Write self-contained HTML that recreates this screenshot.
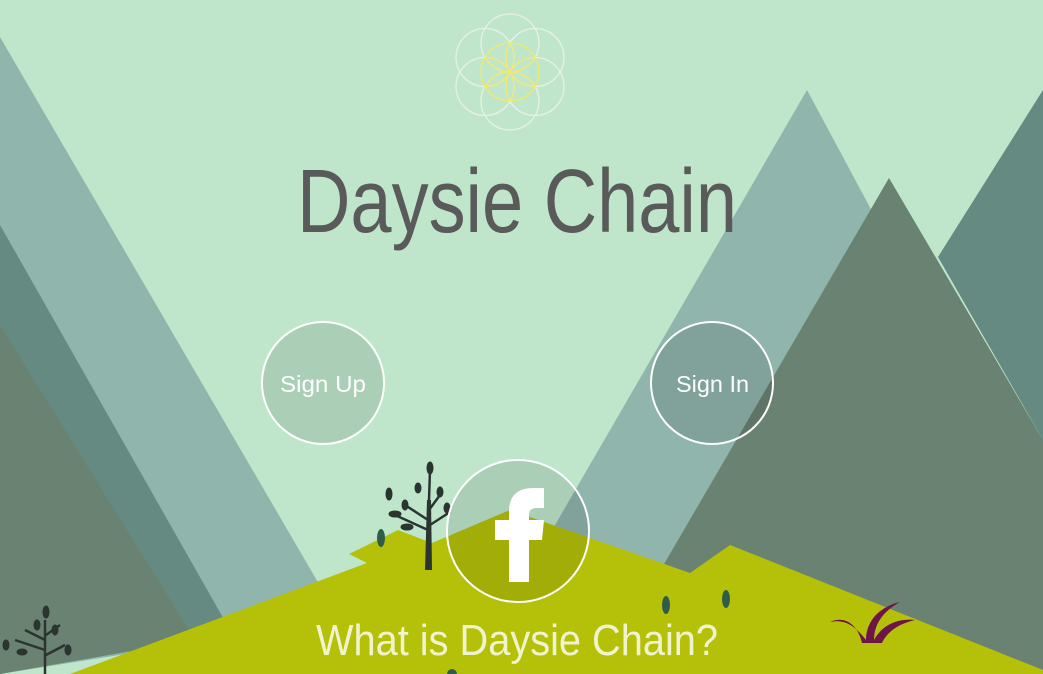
<!DOCTYPE html>
<html><head><meta charset="utf-8"><style>
html,body{margin:0;padding:0}
body{width:1043px;height:674px;overflow:hidden;background:#bfe6cb;position:relative;font-family:"Liberation Sans",sans-serif}
svg{position:absolute;left:0;top:0}
</style></head><body>
<svg width="1043" height="674" viewBox="0 0 1043 674">
<defs><clipPath id="cc"><circle cx="510" cy="72" r="29"/></clipPath></defs>
<polygon points="0,37 340,620 0,674" fill="#8fb5ac"/>
<polygon points="0,225 230,630 0,674" fill="#648a82"/>
<polygon points="0,325 195,640 0,674" fill="#6a8272"/>
<polygon points="807,90 1043,530 1043,674 520,674 500,620" fill="#8fb5ac"/>
<polygon points="1043,90 938,257 1043,440" fill="#648a82"/>
<polygon points="889,178 1043,440 1043,674 600,674" fill="#6a8272"/>
<polygon points="70,674 367,563 349,554 398,530 432,543 510,510 690,573 730,545 1043,670 1043,674" fill="#b5c109"/>
<g fill="none" stroke="#eef3ea" stroke-width="1.3" opacity="0.85">
<circle cx="510" cy="43" r="29"/><circle cx="510" cy="101" r="29"/>
<circle cx="485" cy="57.5" r="29"/><circle cx="535" cy="57.5" r="29"/>
<circle cx="485" cy="86.5" r="29"/><circle cx="535" cy="86.5" r="29"/>
</g>
<g fill="none" stroke="#f2e86a" stroke-width="1.3">
<circle cx="510" cy="72" r="29"/>
<g clip-path="url(#cc)">
<circle cx="510" cy="43" r="29"/><circle cx="510" cy="101" r="29"/>
<circle cx="485" cy="57.5" r="29"/><circle cx="535" cy="57.5" r="29"/>
<circle cx="485" cy="86.5" r="29"/><circle cx="535" cy="86.5" r="29"/>
</g></g>
<g fill="#2a3530" stroke="#2a3530">
<path d="M425 570 L427 500 L431 500 L432 570 Z" stroke="none"/>
<path d="M428 520 L405 505 M428 530 L395 515 M429 510 L440 495 M430 525 L450 512 M429 500 L430 470" stroke-width="2.5" fill="none"/>
<ellipse cx="430" cy="468" rx="3" ry="6"/><ellipse cx="389" cy="494" rx="3" ry="6"/><ellipse cx="395" cy="514" rx="6" ry="3"/>
<ellipse cx="405" cy="505" rx="3" ry="5"/><ellipse cx="440" cy="492" rx="3" ry="5"/><ellipse cx="418" cy="488" rx="3" ry="5"/>
<ellipse cx="407" cy="527" rx="6" ry="3"/><ellipse cx="447" cy="508" rx="3" ry="5"/>
<path d="M45 674 L45 620 M45 640 L25 630 M45 650 L15 640 M46 635 L60 625 M46 655 L65 645" stroke-width="2.5" fill="none"/>
<ellipse cx="46" cy="612" rx="3" ry="6"/><ellipse cx="37" cy="625" rx="3" ry="5"/><ellipse cx="6" cy="645" rx="3" ry="5"/>
<ellipse cx="55" cy="630" rx="3" ry="5"/><ellipse cx="22" cy="652" rx="5" ry="3"/><ellipse cx="68" cy="650" rx="3" ry="5"/>
</g>
<g fill="#2f5e48"><ellipse cx="381" cy="538" rx="4" ry="9"/><ellipse cx="666" cy="605" rx="4" ry="9"/><ellipse cx="726" cy="599" rx="4" ry="9"/><ellipse cx="452" cy="674" rx="5" ry="5"/></g>
<path d="M862 643 C858 625 845 615 830 622 C848 618 858 630 866 640 C866 625 875 608 900 602 C882 612 874 625 874 640 C882 625 898 618 915 620 C898 624 887 632 882 643 Z" fill="#6e1447"/>
<circle cx="323" cy="383" r="61" fill="rgba(0,0,0,0.1)" stroke="#fff" stroke-width="2"/>
<circle cx="712" cy="383" r="61" fill="rgba(0,0,0,0.1)" stroke="#fff" stroke-width="2"/>
<circle cx="518" cy="531" r="71" fill="rgba(0,0,0,0.1)" stroke="#fff" stroke-width="2"/>
<path d="M509 582 L509 540 L495 540 L495 520 L509 520 L509 512 C509 495 518 488 534 488 L544 488 L544 508 L537 508 C531 508 529 510 529 516 L529 520 L544 520 L542 540 L529 540 L529 582 Z" fill="#fff"/>
<text x="297" y="232" font-family="Liberation Sans, sans-serif" font-size="90" fill="#5a5a5a" textLength="440" lengthAdjust="spacingAndGlyphs">Daysie Chain</text>
<text x="280" y="392" font-family="Liberation Sans, sans-serif" font-size="23" fill="#fff" textLength="86" lengthAdjust="spacingAndGlyphs">Sign Up</text>
<text x="676" y="392" font-family="Liberation Sans, sans-serif" font-size="23" fill="#fff" textLength="73" lengthAdjust="spacingAndGlyphs">Sign In</text>
<text x="316" y="655" font-family="Liberation Sans, sans-serif" font-size="44" fill="rgba(255,255,255,0.8)" textLength="402" lengthAdjust="spacingAndGlyphs">What is Daysie Chain?</text>
</svg>
</body></html>
